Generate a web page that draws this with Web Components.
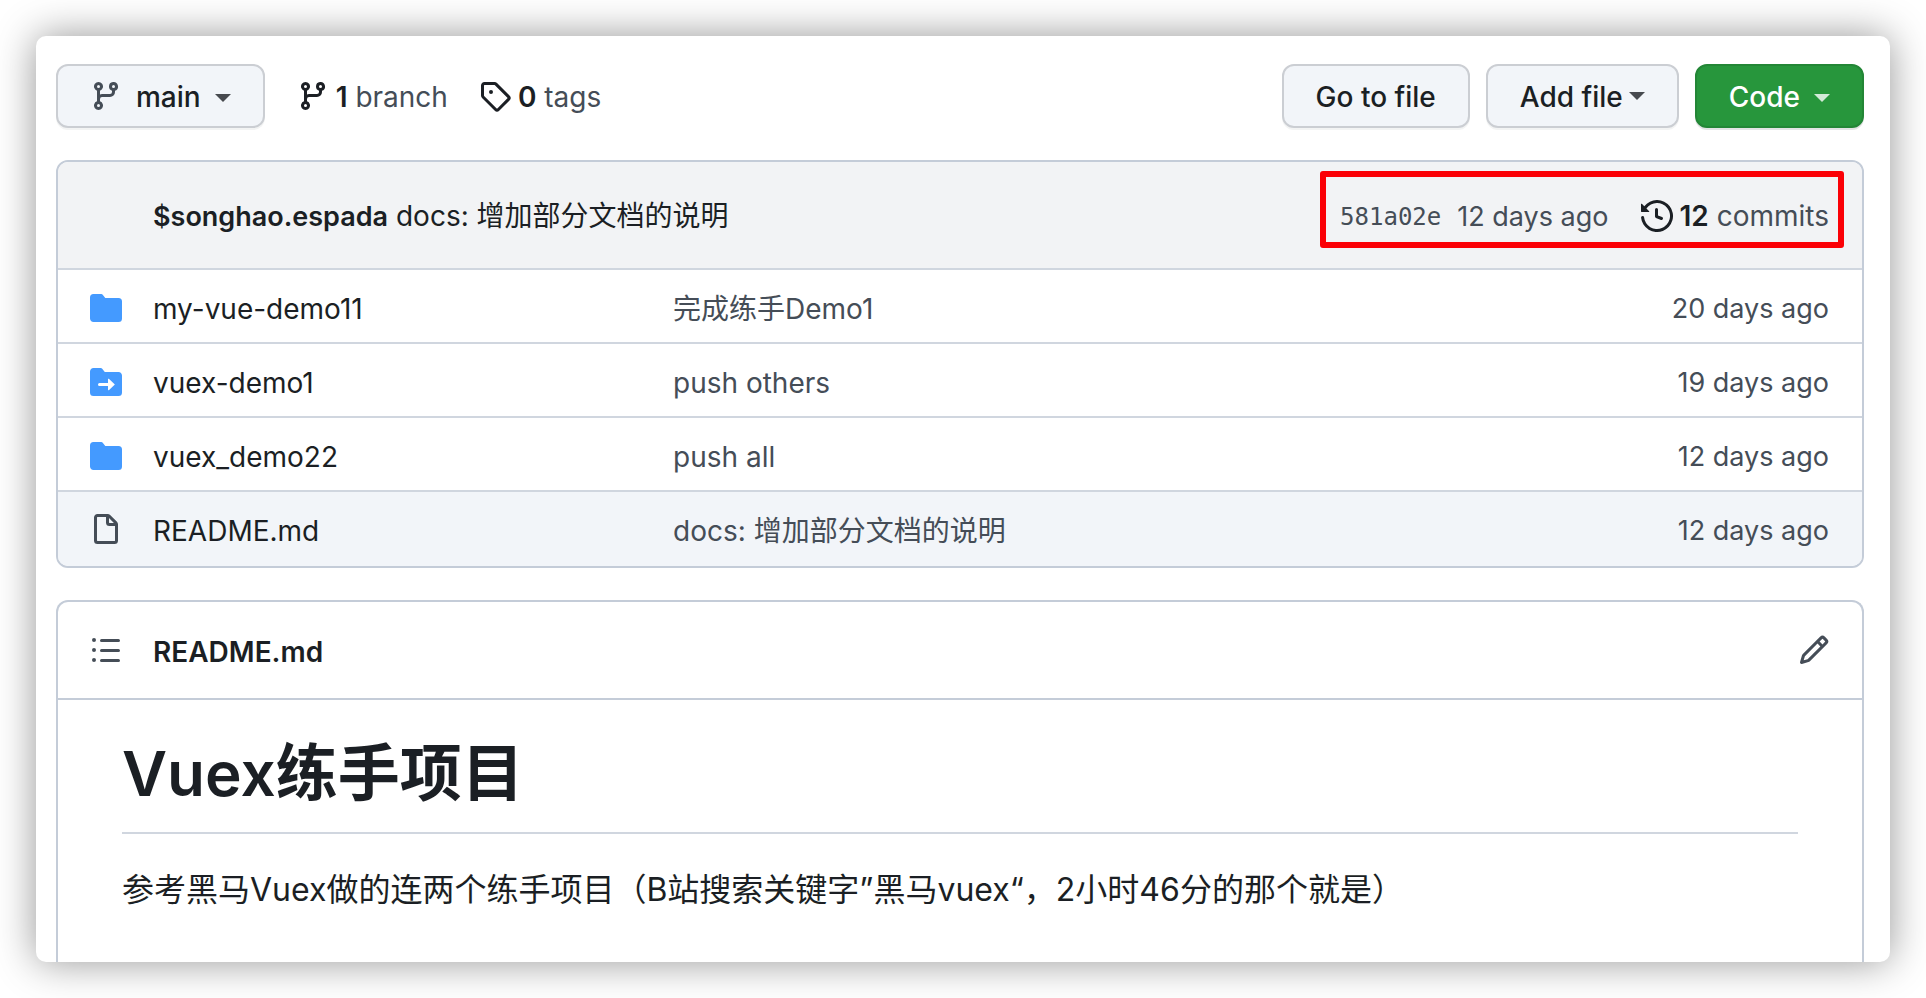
<!DOCTYPE html>
<html lang="zh-CN">
<head>
<meta charset="utf-8">
<title>Repository files</title>
<style>
  body {
    --ink: #1b1f24;
    --muted: #454d57;
    --line: #c4ccd8;
    --line-soft: #d0d6df;
    --subtle: #f2f5f9;
    margin: 0;
    padding: 36px;
    background: #fff;
    color: var(--ink);
    font-family: Inter, "Noto Sans CJK SC", sans-serif;
    font-size: 28px;
    line-height: 42px;
  }
</style>
</head>
<body>
<repo-page>
  <repo-toolbar slot="toolbar"></repo-toolbar>
  <file-list slot="files"></file-list>
  <readme-box slot="readme" name="README.md">
    <span slot="title">Vuex练手项目</span>
    <span slot="text">参考黑马Vuex做的连两个练手项目（B站搜索关键字”黑马vuex“，2小时46分的那个就是）</span>
  </readme-box>
</repo-page>

<script>
const ICONS = {
  branch: 'M11.75 2.5a.75.75 0 100 1.5.75.75 0 000-1.5zm-2.25.75a2.25 2.25 0 113 2.122V6A2.5 2.5 0 0110 8.5H6a1 1 0 00-1 1v1.128a2.251 2.251 0 11-1.5 0V5.372a2.25 2.25 0 111.5 0v1.836A2.492 2.492 0 016 7h4a1 1 0 001-1v-.628A2.25 2.25 0 019.5 3.25zM4.25 12a.75.75 0 100 1.5.75.75 0 000-1.5zM3.5 3.25a.75.75 0 111.5 0 .75.75 0 01-1.5 0z',
  tag: 'M2.5 7.775V2.75a.25.25 0 01.25-.25h5.025a.25.25 0 01.177.073l6.25 6.25a.25.25 0 010 .354l-5.025 5.025a.25.25 0 01-.354 0l-6.25-6.25a.25.25 0 01-.073-.177zm-1.5 0V2.75C1 1.784 1.784 1 2.75 1h5.025c.464 0 .91.184 1.238.513l6.25 6.25a1.75 1.75 0 010 2.474l-5.026 5.026a1.75 1.75 0 01-2.474 0l-6.25-6.25A1.75 1.75 0 011 7.775zM6 5a1 1 0 100 2 1 1 0 000-2z',
  history: 'M1.643 3.143L.427 1.927A.25.25 0 000 2.104V5.75c0 .138.112.25.25.25h3.646a.25.25 0 00.177-.427L2.715 4.215a6.5 6.5 0 11-1.18 4.458.75.75 0 10-1.493.154 8.001 8.001 0 101.6-5.684zM7.75 4a.75.75 0 01.75.75v2.992l2.028.812a.75.75 0 01-.557 1.392l-2.5-1A.75.75 0 017 8.25v-3.5A.75.75 0 017.75 4z',
  folder: 'M1.75 1A1.75 1.75 0 000 2.75v10.5C0 14.216.784 15 1.75 15h12.5A1.75 1.75 0 0016 13.25v-8.5A1.75 1.75 0 0014.25 3h-6.5a.25.25 0 01-.2-.1l-.9-1.2c-.33-.44-.85-.7-1.4-.7h-3.5z',
  submodule: 'M0 2.75C0 1.784.784 1 1.75 1H5c.55 0 1.07.26 1.4.7l.9 1.2a.25.25 0 00.2.1h6.75c.966 0 1.75.784 1.75 1.75v8.5A1.75 1.75 0 0114.25 15H1.75A1.75 1.75 0 010 13.25V2.75zm9.42 9.36l2.883-2.677a.25.25 0 000-.366L9.42 6.39a.25.25 0 00-.42.183V8.5H4.75a.75.75 0 100 1.5H9v1.927c0 .218.26.331.42.183z',
  file: 'M3.75 1.5a.25.25 0 00-.25.25v11.5c0 .138.112.25.25.25h8.5a.25.25 0 00.25-.25V6H9.75A1.75 1.75 0 018 4.25V1.5H3.75zm5.75.56v2.19c0 .138.112.25.25.25h2.19L9.5 2.06zM2 1.75C2 .784 2.784 0 3.75 0h5.086c.464 0 .909.184 1.237.513l3.414 3.414c.329.328.513.773.513 1.237v8.086A1.75 1.75 0 0112.25 15h-8.5A1.75 1.75 0 012 13.25V1.75z',
  list: 'M2 4a1 1 0 100-2 1 1 0 000 2zm3.75-1.5a.75.75 0 000 1.5h8.5a.75.75 0 000-1.5h-8.5zm0 5a.75.75 0 000 1.5h8.5a.75.75 0 000-1.5h-8.5zm0 5a.75.75 0 000 1.5h8.5a.75.75 0 000-1.5h-8.5zM3 8a1 1 0 11-2 0 1 1 0 012 0zm-1 6a1 1 0 100-2 1 1 0 000 2z',
  pencil: 'M11.013 1.427a1.75 1.75 0 012.474 0l1.086 1.086a1.75 1.75 0 010 2.474l-8.61 8.61c-.21.21-.47.364-.756.445l-3.251.93a.75.75 0 01-.927-.928l.929-3.25a1.75 1.75 0 01.445-.758l8.61-8.61zm1.414 1.06a.25.25 0 00-.354 0L10.811 3.75l1.439 1.44 1.263-1.263a.25.25 0 000-.354l-1.086-1.086zM11.189 6.25L9.75 4.81l-6.286 6.287a.25.25 0 00-.064.108l-.558 1.953 1.953-.558a.249.249 0 00.108-.064l6.286-6.286z'
};

class UiElement extends HTMLElement {
  connectedCallback() {
    if (this.shadowRoot) return;
    this.attachShadow({ mode: 'open' }).innerHTML =
      '<style>*{box-sizing:border-box}a{color:inherit;text-decoration:none}' + this.css() + '</style>' + this.html();
  }
}

customElements.define('oct-icon', class extends UiElement {
  css() { return ':host{display:block;flex:none;width:32px;height:32px}svg{display:block;width:100%;height:100%}'; }
  html() { return `<svg viewBox="0 0 16 16" fill="currentColor" fill-rule="evenodd" aria-hidden="true"><path d="${ICONS[this.getAttribute('name')]}"/></svg>`; }
});

customElements.define('tool-button', class extends UiElement {
  css() { return `
    :host { display: block; }
    button {
      display: flex; align-items: center; gap: 14px;
      height: 64px; padding: 0 32px; margin: 0;
      font: inherit; font-weight: 500; color: var(--ink);
      background: var(--subtle); border: 2px solid #cbced3; border-radius: 12px;
      box-shadow: 0 2px 0 rgba(27, 31, 36, .05); white-space: nowrap;
    }
    button.primary { background: #27963c; border-color: #238636; color: #fff; box-shadow: 0 2px 0 rgba(27, 31, 36, .12); }
    button.tight { gap: 6px; }
    .label { padding-top: 1px; }
    .caret { border: 8px solid transparent; border-top-color: currentColor; border-bottom: 0; opacity: .8; }
    button:not(.tight) .caret { margin-top: 4px; }
    ::slotted(oct-icon) { color: var(--muted); }`; }
  html() {
    const caret = this.hasAttribute('caret') ? '<span class="caret"></span>' : '';
    return `<button type="button" class="${this.getAttribute('kind') || ''}"><slot name="icon"></slot><span class="label"><slot></slot></span>${caret}</button>`;
  }
});

customElements.define('count-link', class extends UiElement {
  css() { return `
    :host { display: block; white-space: nowrap; }
    a { display: flex; align-items: center; gap: 7px; color: var(--muted); }
    .label { padding-top: 1px; }
    strong { font-weight: 600; color: var(--ink); }
    oct-icon { color: var(--ink); }`; }
  html() { return `<a href="#"><oct-icon name="${this.getAttribute('icon')}"></oct-icon><span class="label"><strong>${this.getAttribute('count')}</strong> <slot></slot></span></a>`; }
});

customElements.define('repo-toolbar', class extends UiElement {
  css() { return `
    :host { display: flex; align-items: center; gap: 16px; }
    nav { display: flex; gap: 31px; margin: 0 auto 0 16px; }`; }
  html() { return `
    <tool-button caret><oct-icon slot="icon" name="branch"></oct-icon>main</tool-button>
    <nav>
      <count-link icon="branch" count="1">branch</count-link>
      <count-link icon="tag" count="0">tags</count-link>
    </nav>
    <tool-button>Go to file</tool-button>
    <tool-button caret kind="tight">Add file</tool-button>
    <tool-button caret kind="primary">Code</tool-button>`; }
});

customElements.define('file-list', class extends UiElement {
  css() { return `
    :host { display: block; border: 2px solid var(--line); border-radius: 12px; overflow: hidden; }
    header {
      display: flex; align-items: center; justify-content: space-between;
      height: 106px; padding: 0 18px 0 95px; background: #f2f3f5; white-space: nowrap;
    }
    .latest { padding-top: 2px; }
    .latest strong { font-weight: 600; font-size: 27px; }
    .commit {
      display: flex; align-items: center; gap: 16px;
      height: 77px; margin-bottom: 11px; padding: 12px 9px 0 14px;
      border: 6px solid #fb0006; border-radius: 3px; color: var(--muted);
    }
    .hash { font-family: "DejaVu Sans Mono", monospace; font-size: 24px; padding-top: 2px; }
    .date { font-size: 27px; padding-top: 2px; }
    count-link { margin-left: 16px; }
    table { width: 100%; border-collapse: separate; border-spacing: 0; table-layout: fixed; }
    td { height: 74px; padding: 5px 0 0; border-top: 2px solid var(--line-soft); color: var(--muted); white-space: nowrap; vertical-align: middle; }
    .icon { width: 95px; padding: 4px 0 0 32px; }
    .name { width: 520px; color: var(--ink); }
    .age { width: 240px; padding-right: 33px; text-align: right; font-size: 27px; }
    .folder, .submodule { color: #449aff; }
    tr:last-child td { background: var(--subtle); height: 76px; padding-bottom: 2px; }`; }
  html() {
    const rows = [
      ['folder', 'my-vue-demo11', '完成练手Demo1', '20 days ago'],
      ['submodule', 'vuex-demo1', 'push others', '19 days ago'],
      ['folder', 'vuex_demo22', 'push all', '12 days ago'],
      ['file', 'README.md', 'docs: 增加部分文档的说明', '12 days ago']
    ];
    return `
    <header>
      <span class="latest"><strong>$songhao.espada</strong> <a href="#">docs: 增加部分文档的说明</a></span>
      <div class="commit">
        <a class="hash" href="#">581a02e</a>
        <span class="date">12 days ago</span>
        <count-link icon="history" count="12">commits</count-link>
      </div>
    </header>
    <table>${rows.map(([icon, name, message, age]) => `
      <tr>
        <td class="icon ${icon}"><oct-icon name="${icon}"></oct-icon></td>
        <td class="name"><a href="#">${name}</a></td>
        <td><a href="#">${message}</a></td>
        <td class="age">${age}</td>
      </tr>`).join('')}
    </table>`;
  }
});

customElements.define('readme-box', class extends UiElement {
  css() { return `
    :host { display: block; border: 2px solid var(--line); border-bottom: 0; border-radius: 12px 12px 0 0; }
    header {
      display: flex; align-items: center; height: 98px; padding: 0 32px;
      border-bottom: 2px solid var(--line);
    }
    h2 { flex: 1; margin: 4px 0 0 31px; font-size: inherit; line-height: inherit; font-weight: 600; }
    button { display: block; margin: 0; padding: 0; border: 0; background: none; color: var(--muted); }
    article { padding: 34px 64px 48px; font-size: 32px; line-height: 48px; }
    h1 { margin: 0 0 32px; padding-bottom: 18px; border-bottom: 2px solid var(--line-soft); font-size: 62px; line-height: 80px; font-weight: 600; }
    p { margin: 0; }`; }
  html() { return `
    <header>
      <button type="button" aria-label="Contents"><oct-icon name="list"></oct-icon></button>
      <h2>${this.getAttribute('name')}</h2>
      <button type="button" aria-label="Edit"><oct-icon name="pencil"></oct-icon></button>
    </header>
    <article>
      <h1><slot name="title"></slot></h1>
      <p><slot name="text"></slot></p>
    </article>`; }
});

customElements.define('repo-page', class extends UiElement {
  css() { return `
    :host { display: block; }
    main {
      display: flex; flex-direction: column; gap: 32px;
      padding: 28px 26px 0 20px; background: #fff; border-radius: 10px;
      box-shadow: 0 0 40px rgba(0, 0, 0, .42);
    }`; }
  html() { return '<main><slot name="toolbar"></slot><slot name="files"></slot><slot name="readme"></slot></main>'; }
});
</script>
</body>
</html>
